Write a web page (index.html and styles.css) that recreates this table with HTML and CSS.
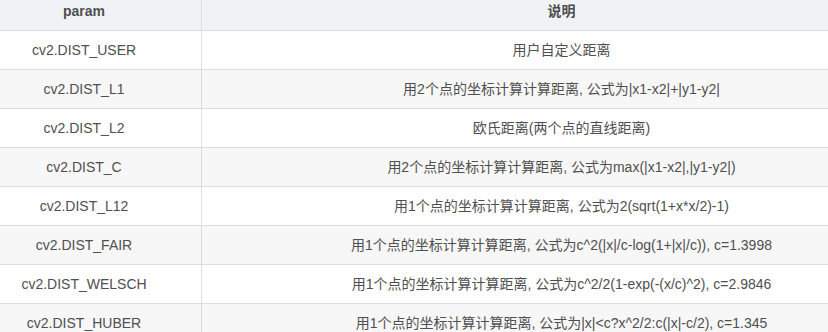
FILE: index.html
```html
<!DOCTYPE html>
<html lang="zh-CN">
<head>
  <meta charset="UTF-8">
  <title>distanceType</title>
  <link rel="stylesheet" href="styles.css">
</head>
<body>
  <div class="article">
    <table class="param-table">
      <colgroup>
        <col class="col-param">
        <col class="col-desc">
      </colgroup>
      <thead>
        <tr>
          <th>param</th>
          <th>说明</th>
        </tr>
      </thead>
      <tbody>
        <tr><td>cv2.DIST_USER</td><td>用户自定义距离</td></tr>
        <tr><td>cv2.DIST_L1</td><td>用2个点的坐标计算计算距离, 公式为|x1-x2|+|y1-y2|</td></tr>
        <tr><td>cv2.DIST_L2</td><td>欧氏距离(两个点的直线距离)</td></tr>
        <tr><td>cv2.DIST_C</td><td>用2个点的坐标计算计算距离, 公式为max(|x1-x2|,|y1-y2|)</td></tr>
        <tr><td>cv2.DIST_L12</td><td>用1个点的坐标计算计算距离, 公式为2(sqrt(1+x*x/2)-1)</td></tr>
        <tr><td>cv2.DIST_FAIR</td><td>用1个点的坐标计算计算距离, 公式为c^2(|x|/c-log(1+|x|/c)), c=1.3998</td></tr>
        <tr><td>cv2.DIST_WELSCH</td><td>用1个点的坐标计算计算距离, 公式为c^2/2(1-exp(-(x/c)^2), c=2.9846</td></tr>
        <tr><td>cv2.DIST_HUBER</td><td>用1个点的坐标计算计算距离, 公式为|x|&lt;c?x^2/2:c(|x|-c/2), c=1.345</td></tr>
      </tbody>
    </table>
  </div>
</body>
</html>
```

FILE: styles.css
```css
/* Base styles */
body {
  margin: 0;
  overflow: hidden;
  background: #fff;
  font-family: "Liberation Sans", "Noto Sans CJK SC", sans-serif;
}

/* The table is shown cropped: its top and left edges lie outside the view */
.article {
  margin: -9px 0 0 -34px;
}

/* Table styles */
.param-table {
  border-collapse: collapse;
  table-layout: fixed;
  width: 956px;
  font-size: 14px;
  line-height: 22px;
  color: #4f4f4f;
}

.col-param {
  width: 235px;
}

.param-table th,
.param-table td {
  padding: 8px;
  border: 1px solid #ddd;
  text-align: center;
  white-space: nowrap;
}

.param-table th {
  background: #eff3f5;
  font-weight: bold;
}

.param-table tbody tr:nth-child(2n) {
  background: #f7f7f7;
}
```
